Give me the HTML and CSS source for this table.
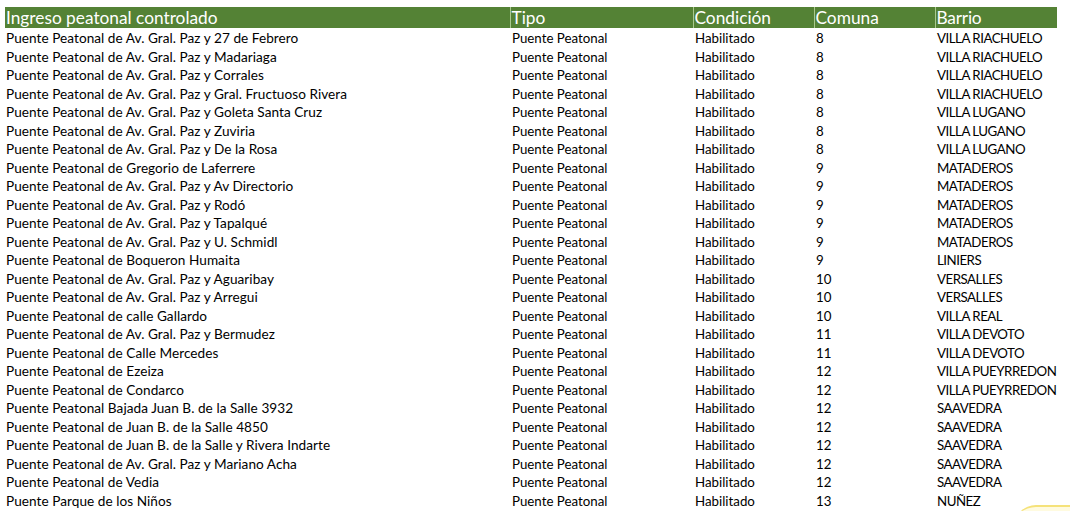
FILE: index.html
```html
<!DOCTYPE html>
<html lang="es">
<head>
<meta charset="utf-8">
<link rel="stylesheet" href="styles.css">
</head>
<body>
<table class="sheet">
<colgroup>
<col class="c1"><col class="c2"><col class="c3"><col class="c4"><col class="c5">
</colgroup>
<thead>
<tr><th>Ingreso peatonal controlado</th><th>Tipo</th><th>Condición</th><th>Comuna</th><th>Barrio</th></tr>
</thead>
<tbody>
<tr><td>Puente Peatonal de Av. Gral. Paz y 27 de Febrero</td><td>Puente Peatonal</td><td>Habilitado</td><td>8</td><td>VILLA RIACHUELO</td></tr>
<tr><td>Puente Peatonal de Av. Gral. Paz y Madariaga</td><td>Puente Peatonal</td><td>Habilitado</td><td>8</td><td>VILLA RIACHUELO</td></tr>
<tr><td>Puente Peatonal de Av. Gral. Paz y Corrales</td><td>Puente Peatonal</td><td>Habilitado</td><td>8</td><td>VILLA RIACHUELO</td></tr>
<tr><td>Puente Peatonal de Av. Gral. Paz y Gral. Fructuoso Rivera</td><td>Puente Peatonal</td><td>Habilitado</td><td>8</td><td>VILLA RIACHUELO</td></tr>
<tr><td>Puente Peatonal de Av. Gral. Paz y Goleta Santa Cruz</td><td>Puente Peatonal</td><td>Habilitado</td><td>8</td><td>VILLA LUGANO</td></tr>
<tr><td>Puente Peatonal de Av. Gral. Paz y Zuviria</td><td>Puente Peatonal</td><td>Habilitado</td><td>8</td><td>VILLA LUGANO</td></tr>
<tr><td>Puente Peatonal de Av. Gral. Paz y De la Rosa</td><td>Puente Peatonal</td><td>Habilitado</td><td>8</td><td>VILLA LUGANO</td></tr>
<tr><td>Puente Peatonal de Gregorio de Laferrere</td><td>Puente Peatonal</td><td>Habilitado</td><td>9</td><td>MATADEROS</td></tr>
<tr><td>Puente Peatonal de Av. Gral. Paz y Av Directorio</td><td>Puente Peatonal</td><td>Habilitado</td><td>9</td><td>MATADEROS</td></tr>
<tr><td>Puente Peatonal de Av. Gral. Paz y Rodó</td><td>Puente Peatonal</td><td>Habilitado</td><td>9</td><td>MATADEROS</td></tr>
<tr><td>Puente Peatonal de Av. Gral. Paz y Tapalqué</td><td>Puente Peatonal</td><td>Habilitado</td><td>9</td><td>MATADEROS</td></tr>
<tr><td>Puente Peatonal de Av. Gral. Paz y U. Schmidl</td><td>Puente Peatonal</td><td>Habilitado</td><td>9</td><td>MATADEROS</td></tr>
<tr><td>Puente Peatonal de Boqueron Humaita</td><td>Puente Peatonal</td><td>Habilitado</td><td>9</td><td>LINIERS</td></tr>
<tr><td>Puente Peatonal de Av. Gral. Paz y Aguaribay</td><td>Puente Peatonal</td><td>Habilitado</td><td>10</td><td>VERSALLES</td></tr>
<tr><td>Puente Peatonal de Av. Gral. Paz y Arregui</td><td>Puente Peatonal</td><td>Habilitado</td><td>10</td><td>VERSALLES</td></tr>
<tr><td>Puente Peatonal de calle Gallardo</td><td>Puente Peatonal</td><td>Habilitado</td><td>10</td><td>VILLA REAL</td></tr>
<tr><td>Puente Peatonal de Av. Gral. Paz y Bermudez</td><td>Puente Peatonal</td><td>Habilitado</td><td>11</td><td>VILLA DEVOTO</td></tr>
<tr><td>Puente Peatonal de Calle Mercedes</td><td>Puente Peatonal</td><td>Habilitado</td><td>11</td><td>VILLA DEVOTO</td></tr>
<tr><td>Puente Peatonal de Ezeiza</td><td>Puente Peatonal</td><td>Habilitado</td><td>12</td><td>VILLA PUEYRREDON</td></tr>
<tr><td>Puente Peatonal de Condarco</td><td>Puente Peatonal</td><td>Habilitado</td><td>12</td><td>VILLA PUEYRREDON</td></tr>
<tr><td>Puente Peatonal Bajada Juan B. de la Salle 3932</td><td>Puente Peatonal</td><td>Habilitado</td><td>12</td><td>SAAVEDRA</td></tr>
<tr><td>Puente Peatonal de Juan B. de la Salle 4850</td><td>Puente Peatonal</td><td>Habilitado</td><td>12</td><td>SAAVEDRA</td></tr>
<tr><td>Puente Peatonal de Juan B. de la Salle y Rivera Indarte</td><td>Puente Peatonal</td><td>Habilitado</td><td>12</td><td>SAAVEDRA</td></tr>
<tr><td>Puente Peatonal de Av. Gral. Paz y Mariano Acha</td><td>Puente Peatonal</td><td>Habilitado</td><td>12</td><td>SAAVEDRA</td></tr>
<tr><td>Puente Peatonal de Vedia</td><td>Puente Peatonal</td><td>Habilitado</td><td>12</td><td>SAAVEDRA</td></tr>
<tr><td>Puente Parque de los Niños</td><td>Puente Peatonal</td><td>Habilitado</td><td>13</td><td>NUÑEZ</td></tr>
</tbody>
</table>
<div class="mark"></div>
</body>
</html>
```

FILE: styles.css
```css
html, body {
  margin: 0;
  padding: 0;
  background: #ffffff;
  overflow: hidden;
}
body {
  padding: 7px 0 0 5px;
  font-family: Lato, "Liberation Sans", sans-serif;
  color: #000000;
}
.sheet {
  border-collapse: collapse;
  table-layout: fixed;
  width: 1052px;
}
.c1 { width: 505px; }
.c2 { width: 183px; }
.c3 { width: 121px; }
.c4 { width: 121px; }
.c5 { width: 122px; }
.sheet th {
  background: #548235;
  color: #ffffff;
  font-weight: normal;
  font-size: 17.3px;
  text-align: left;
  height: 21px;
  padding: 0 0 0 1px;
  line-height: 21px;
  border-left: 1px solid #a9c98e;
  white-space: nowrap;
  overflow: hidden;
}
.sheet th:first-child { border-left: none; }
.sheet th:last-child { letter-spacing: -0.2px; }
.sheet td {
  font-size: 13.3px;
  height: 18.52px;
  box-sizing: border-box;
  line-height: 16.5px;
  padding: 2px 0 0 1px;
  white-space: nowrap;
  overflow: hidden;
}
.sheet td:first-child {
  font-size: 13.6px;
  letter-spacing: 0.05px;
}
.sheet td + td { padding-left: 2px; }
.sheet td:last-child { letter-spacing: -0.5px; }
.mark {
  position: absolute;
  left: 1014px;
  top: 505px;
  width: 90px;
  height: 20px;
  border-top: 2px solid #f5e27a;
  border-radius: 30px 0 0 0;
  background: #fffbe0;
}
```
